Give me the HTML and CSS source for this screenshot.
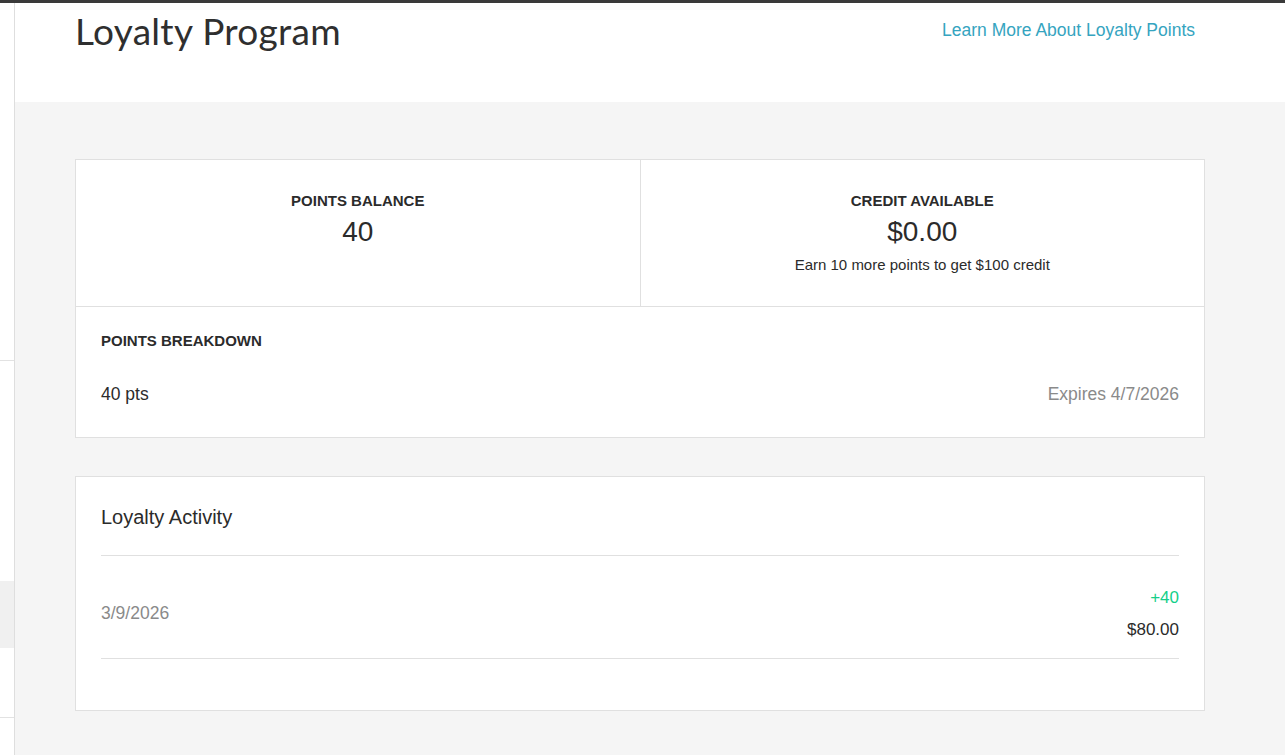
FILE: index.html
```html
<!DOCTYPE html>
<html>
<head>
<meta charset="utf-8">
<link rel="stylesheet" href="styles.css">
</head>
<body>
<div class="topbar"></div>
<div class="layout">
  <aside class="sidebar">
    <div class="side-top"></div>
    <div class="side-gap"></div>
    <div class="side-active"></div>
    <div class="side-item"></div>
    <div class="side-rest"></div>
  </aside>
  <main class="main">
    <header class="page-header">
      <h1 class="page-title">Loyalty Program</h1>
      <a class="learn-link" href="#">Learn More About Loyalty Points</a>
    </header>
    <section class="content">
      <div class="card summary">
        <div class="summary-row">
          <div class="summary-cell">
            <div class="label">POINTS BALANCE</div>
            <div class="big-value">40</div>
          </div>
          <div class="summary-cell">
            <div class="label">CREDIT AVAILABLE</div>
            <div class="big-value">$0.00</div>
            <div class="hint">Earn 10 more points to get $100 credit</div>
          </div>
        </div>
        <div class="breakdown">
          <div class="label">POINTS BREAKDOWN</div>
          <div class="breakdown-row">
            <span class="pts">40 pts</span>
            <span class="expires">Expires 4/7/2026</span>
          </div>
        </div>
      </div>
      <div class="card activity">
        <h2 class="activity-title">Loyalty Activity</h2>
        <div class="activity-row">
          <span class="activity-date">3/9/2026</span>
          <div class="activity-amounts">
            <span class="plus">+40</span>
            <span class="amount">$80.00</span>
          </div>
        </div>
      </div>
    </section>
  </main>
</div>
</body>
</html>
```
FILE: styles.css
```css
html, body {
  margin: 0;
  padding: 0;
  height: 100%;
}
body {
  font-family: "Liberation Sans", Arial, sans-serif;
  color: #333;
  background: #f5f5f5;
  overflow: hidden;
}
.topbar {
  height: 3px;
  background: #3a3a3a;
}
.layout {
  display: flex;
  height: 752px;
}
.sidebar {
  width: 14px;
  border-right: 1px solid #dedede;
  background: #fff;
  display: flex;
  flex-direction: column;
}
.side-top {
  height: 357px;
  border-bottom: 1px solid #e2e2e2;
}
.side-gap {
  height: 220px;
}
.side-active {
  height: 67px;
  background: #f0f0f0;
}
.side-item {
  height: 69px;
  border-bottom: 1px solid #e2e2e2;
}
.side-rest {
  flex: 1;
}
.main {
  flex: 1;
  background: #f5f5f5;
}
.page-header {
  background: #fff;
  height: 99px;
  box-sizing: border-box;
  display: flex;
  justify-content: space-between;
  align-items: flex-start;
  padding: 0 90px 0 60px;
}
.page-title {
  margin: 7px 0 0;
  font-family: Lato, "Noto Sans", sans-serif;
  font-weight: 400;
  font-size: 37px;
  line-height: 42px;
  color: #2f2f2f;
  letter-spacing: 0.3px;
}
.learn-link {
  margin-top: 16px;
  font-size: 17.5px;
  line-height: 22px;
  color: #35a4c0;
  text-decoration: none;
}
.content {
  padding: 57px 80px 0 60px;
  display: flex;
  flex-direction: column;
  gap: 38px;
}
.card {
  background: #fff;
  border: 1px solid #e0e0e0;
}
.summary-row {
  display: flex;
  border-bottom: 1px solid #e0e0e0;
  height: 146px;
}
.summary-cell {
  flex: 1;
  text-align: center;
  padding-top: 32px;
  box-sizing: border-box;
}
.summary-cell + .summary-cell {
  border-left: 1px solid #e0e0e0;
}
.label {
  font-size: 15px;
  font-weight: 700;
  line-height: 17px;
  color: #2b2b2b;
}
.big-value {
  font-size: 28px;
  line-height: 34px;
  margin-top: 6px;
  color: #2b2b2b;
}
.hint {
  font-size: 15px;
  line-height: 18px;
  margin-top: 7px;
  color: #2b2b2b;
}
.breakdown {
  padding: 25px 25px 0;
  height: 130px;
  box-sizing: border-box;
}
.breakdown-row {
  display: flex;
  justify-content: space-between;
  margin-top: 35px;
  font-size: 17.5px;
  line-height: 20px;
}
.pts {
  color: #2b2b2b;
}
.expires {
  color: #8a8a8a;
}
.activity {
  padding: 0 25px;
  height: 235px;
  box-sizing: border-box;
}
.activity-title {
  margin: 0;
  font-weight: 400;
  font-size: 20px;
  line-height: 24px;
  padding: 28px 0 26px;
  border-bottom: 1px solid #e0e0e0;
  color: #2b2b2b;
}
.activity-row {
  display: flex;
  justify-content: space-between;
  align-items: center;
  height: 103px;
  box-sizing: border-box;
  padding-top: 12px;
  border-bottom: 1px solid #e0e0e0;
}
.activity-date {
  color: #8a8a8a;
  font-size: 17.5px;
}
.activity-amounts {
  display: flex;
  flex-direction: column;
  align-items: flex-end;
  gap: 12px;
  margin-top: 2px;
  font-size: 17px;
  line-height: 20px;
}
.plus {
  color: #14cf8a;
}
.amount {
  color: #2b2b2b;
}
```
